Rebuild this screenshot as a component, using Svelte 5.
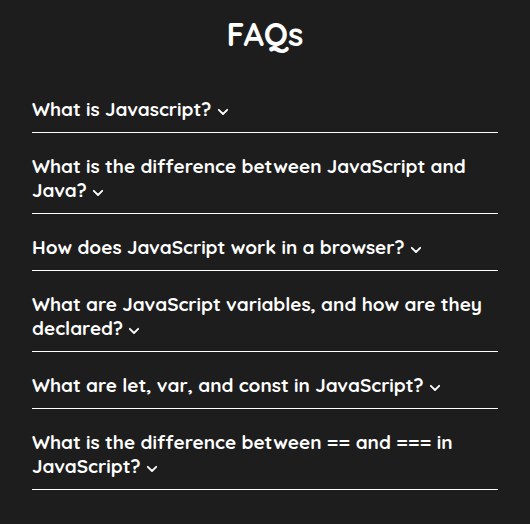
<script>
  const faqs = [
    { question: 'What is Javascript?', answer: 'A programming language that makes web pages interactive.' },
    { question: 'What is the difference between JavaScript and Java?', answer: 'They are separate languages with different syntax, typing and uses.' },
    { question: 'How does JavaScript work in a browser?', answer: 'The browser has an engine that parses, compiles and runs the code.' },
    { question: 'What are JavaScript variables, and how are they declared?', answer: 'Variables are named values, declared with let, const or var.' },
    { question: 'What are let, var, and const in JavaScript?', answer: 'They are keywords that declare variables with different scopes.' },
    { question: 'What is the difference between == and === in JavaScript?', answer: 'The first converts types before comparing, the second does not.' },
  ];

  let open = $state(-1);

  function toggle(index) {
    open = open === index ? -1 : index;
  }
</script>

<main>
  <h1>FAQs</h1>
  {#each faqs as faq, index}
    <section>
      <h2>
        <button type="button" aria-expanded={open === index} onclick={() => toggle(index)}>
          {faq.question}
          <svg class:flipped={open === index} viewBox="0 0 12 8" aria-hidden="true">
            <path d="M1.8 1.8 L6 6 L10.2 1.8" />
          </svg>
        </button>
      </h2>
      {#if open === index}
        <p>{faq.answer}</p>
      {/if}
    </section>
  {/each}
</main>

<style>
  :global(body) {
    margin: 0;
    background: #1d1d1d;
  }

  main {
    padding: 14px 32px 32px;
    color: #fff;
    font-family: Quicksand, Lato, "Liberation Sans", sans-serif;
  }

  h1 {
    margin: 0 0 43px;
    font-size: 32px;
    font-weight: 700;
    line-height: 40px;
    text-align: center;
  }

  section {
    padding-bottom: 11px;
    margin-bottom: 21px;
    border-bottom: 1px solid #fff;
  }

  section:last-child {
    margin-bottom: 0;
  }

  h2 {
    margin: 0;
    font-size: 19px;
    line-height: 24px;
  }

  button {
    display: block;
    width: 100%;
    padding: 0;
    border: 0;
    background: none;
    color: inherit;
    font: inherit;
    font-weight: 700;
    text-align: left;
    cursor: pointer;
  }

  svg {
    width: 12px;
    height: 8px;
    fill: none;
    stroke: currentColor;
    stroke-width: 1.8;
    stroke-linecap: round;
    stroke-linejoin: round;
  }

  .flipped {
    transform: rotate(180deg);
  }

  p {
    margin: 8px 0 0;
    font-size: 16px;
    line-height: 24px;
  }
</style>
